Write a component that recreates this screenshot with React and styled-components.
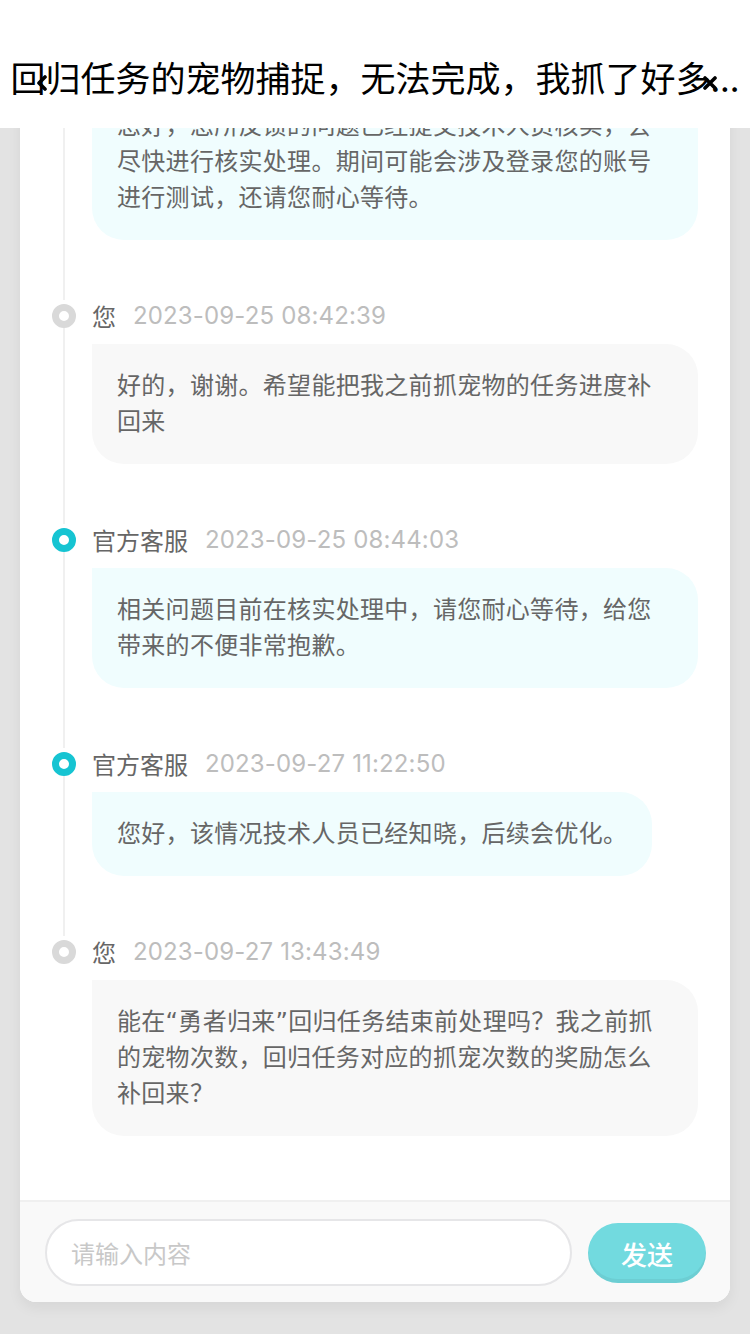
import React, { useLayoutEffect, useRef } from 'react';
import styled, { createGlobalStyle } from 'styled-components';

const messages = [
  {
    id: 1,
    from: 'user',
    name: '您',
    time: '2023-09-25 08:30:16',
    text: '回归任务的宠物捕捉，无法完成，我抓了好多宠物，任务进度一直没有增加。',
  },
  {
    id: 2,
    from: 'service',
    name: '官方客服',
    time: '2023-09-25 08:36:52',
    text: '您好，您所反馈的问题已经提交技术人员核实，会尽快进行核实处理。期间可能会涉及登录您的账号进行测试，还请您耐心等待。',
  },
  {
    id: 3,
    from: 'user',
    name: '您',
    time: '2023-09-25 08:42:39',
    text: '好的，谢谢。希望能把我之前抓宠物的任务进度补回来',
  },
  {
    id: 4,
    from: 'service',
    name: '官方客服',
    time: '2023-09-25 08:44:03',
    text: '相关问题目前在核实处理中，请您耐心等待，给您带来的不便非常抱歉。',
  },
  {
    id: 5,
    from: 'service',
    name: '官方客服',
    time: '2023-09-27 11:22:50',
    text: '您好，该情况技术人员已经知晓，后续会优化。',
  },
  {
    id: 6,
    from: 'user',
    name: '您',
    time: '2023-09-27 13:43:49',
    text: '能在“勇者归来”回归任务结束前处理吗？我之前抓的宠物次数，回归任务对应的抓宠次数的奖励怎么补回来？',
  },
];

const IcBack = () => (
  <svg width='12' height='16' viewBox='0 0 12 16'>
    <path d='M9 2 L3 8 L9 14' fill='none' stroke='#000' strokeWidth='3.6' strokeLinecap='round' strokeLinejoin='round' />
  </svg>
);

const IcClose = () => (
  <svg width='16' height='14' viewBox='0 0 16 14'>
    <path d='M3 2 L13 12 M13 2 L3 12' fill='none' stroke='#000' strokeWidth='3.6' strokeLinecap='round' />
  </svg>
);

const App = () => {
  const listRef = useRef(null);

  // 채팅이라 항상 맨 아래로 스크롤
  useLayoutEffect(() => {
    if (listRef.current) listRef.current.scrollTop = listRef.current.scrollHeight;
  }, []);

  return (
    <>
      <GlobalStyle />
      <StHeader>
        <StNavBar>
          <StBackBtn type='button'>
            <IcBack />
          </StBackBtn>
          <StTitle>回归任务的宠物捕捉，无法完成，我抓了好多...</StTitle>
          <StCloseBtn type='button'>
            <IcClose />
          </StCloseBtn>
        </StNavBar>
      </StHeader>

      <StPage>
        <StCard>
          <StList ref={listRef}>
            {messages.map((msg, idx) => {
              const isLast = idx === messages.length - 1;
              const isService = msg.from === 'service';

              return (
                <StEntry key={msg.id}>
                  <StRail>
                    <StDot $service={isService} />
                    {!isLast && <StRailLine />}
                  </StRail>
                  <StBody>
                    <StMeta>
                      <StName>{msg.name}</StName>
                      <StTime>{msg.time}</StTime>
                    </StMeta>
                    <StBubble $service={isService}>{msg.text}</StBubble>
                  </StBody>
                </StEntry>
              );
            })}
          </StList>

          <StInputBar>
            <StInput placeholder='请输入内容' />
            <StSendBtn type='button'>发送</StSendBtn>
          </StInputBar>
        </StCard>
      </StPage>
    </>
  );
};

export default App;

const GlobalStyle = createGlobalStyle`
  * {
    box-sizing: border-box;
  }

  body {
    margin: 0;
    background-color: #e3e3e3;
    font-family: 'Noto Sans CJK SC', sans-serif;
  }
`;

const StHeader = styled.header`
  position: fixed;
  top: 0;
  left: 0;
  right: 0;
  z-index: 10;

  height: 128px;
  padding-top: 26px;

  background-color: #ffffff;
  overflow: hidden;
`;

const StNavBar = styled.div`
  position: relative;
  display: flex;
  justify-content: center;
  align-items: center;

  height: 100px;
`;

const StTitle = styled.h1`
  margin: 0;

  font-family: 'Noto Sans CJK SC', sans-serif;
  font-weight: 400;
  font-size: 35px;
  line-height: 1;
  white-space: nowrap;

  color: #000000;
`;

const StIconBtn = styled.button`
  position: absolute;
  top: 50%;
  z-index: 1;

  display: flex;
  padding: 0;
  margin-top: -1px;

  border: none;
  background: none;
`;

const StBackBtn = styled(StIconBtn)`
  left: 36px;
`;

const StCloseBtn = styled(StIconBtn)`
  right: 32px;
  margin-top: 0;
`;

const StPage = styled.main`
  height: 100vh;
  padding: 0 20px 32px;
`;

const StCard = styled.section`
  display: flex;
  flex-direction: column;

  height: 100%;

  border-radius: 0 0 16px 16px;
  background-color: #ffffff;
  box-shadow: 0 6px 14px rgba(0, 0, 0, 0.06);
  overflow: hidden;
`;

const StList = styled.div`
  flex: 1;
  padding: 40px 32px 4px 32px;

  overflow-y: auto;
  scrollbar-width: none;

  &::-webkit-scrollbar {
    display: none;
  }
`;

const StEntry = styled.article`
  display: flex;
  gap: 16px;

  padding-bottom: 60px;
`;

const StRail = styled.div`
  display: flex;
  flex-direction: column;
  align-items: center;
  flex-shrink: 0;

  width: 24px;
  margin-bottom: -60px;
  padding-top: 4px;
`;

const StDot = styled.span`
  flex-shrink: 0;

  width: 24px;
  height: 24px;

  border-radius: 50%;
  border: 7.5px solid ${({ $service }) => ($service ? '#16c4d2' : '#d9d9d9')};
  background-color: #ffffff;
`;

const StRailLine = styled.span`
  flex: 1;

  width: 2px;

  background-color: #f0f0f0;
`;

const StBody = styled.div`
  display: flex;
  flex-direction: column;
  align-items: flex-start;
  flex: 1;
  min-width: 0;
`;

const StMeta = styled.div`
  display: flex;
  align-items: center;
  gap: 17px;

  height: 32px;
  margin-bottom: 12px;
`;

const StName = styled.span`
  font-size: 24px;
  line-height: 1;

  color: #666666;
`;

const StTime = styled.span`
  font-family: 'Inter', 'Noto Sans CJK SC', sans-serif;
  font-size: 24px;
  line-height: 1;
  letter-spacing: 0.15px;

  color: #bdbdbd;
`;

const StBubble = styled.p`
  max-width: 100%;
  margin: 0;
  padding: 24px 25px;

  border-radius: 0 32px 32px 32px;
  background-color: ${({ $service }) => ($service ? '#f0fdfe' : '#f8f8f8')};

  font-family: 'DejaVu Sans', 'Noto Sans CJK SC', sans-serif;
  font-size: 24px;
  line-height: 36px;
  letter-spacing: 0.3px;

  color: #666666;
`;

const StInputBar = styled.div`
  display: flex;
  align-items: center;
  gap: 16px;

  height: 102px;
  padding: 0 24px 0 25px;

  border-top: 2px solid #f0f0f0;
  background-color: #f9f9f9;
`;

const StInput = styled.input`
  flex: 1;
  min-width: 0;
  height: 67px;
  padding: 0 24px;

  border-radius: 34px;
  border: 2px solid #e6e6e8;
  background-color: #ffffff;
  outline: none;

  font-family: 'Noto Sans CJK SC', sans-serif;
  font-size: 24px;

  &::placeholder {
    color: #c8c8c8;
  }
`;

const StSendBtn = styled.button`
  flex-shrink: 0;

  width: 118px;
  height: 60px;
  margin-top: 2px;

  border: none;
  border-radius: 30px;
  background-color: #72dadf;
  box-shadow: inset 0 -4px 0 rgba(0, 0, 0, 0.05);

  font-family: 'Noto Sans CJK SC', sans-serif;
  font-weight: 500;
  font-size: 26px;

  color: #ffffff;
`;
